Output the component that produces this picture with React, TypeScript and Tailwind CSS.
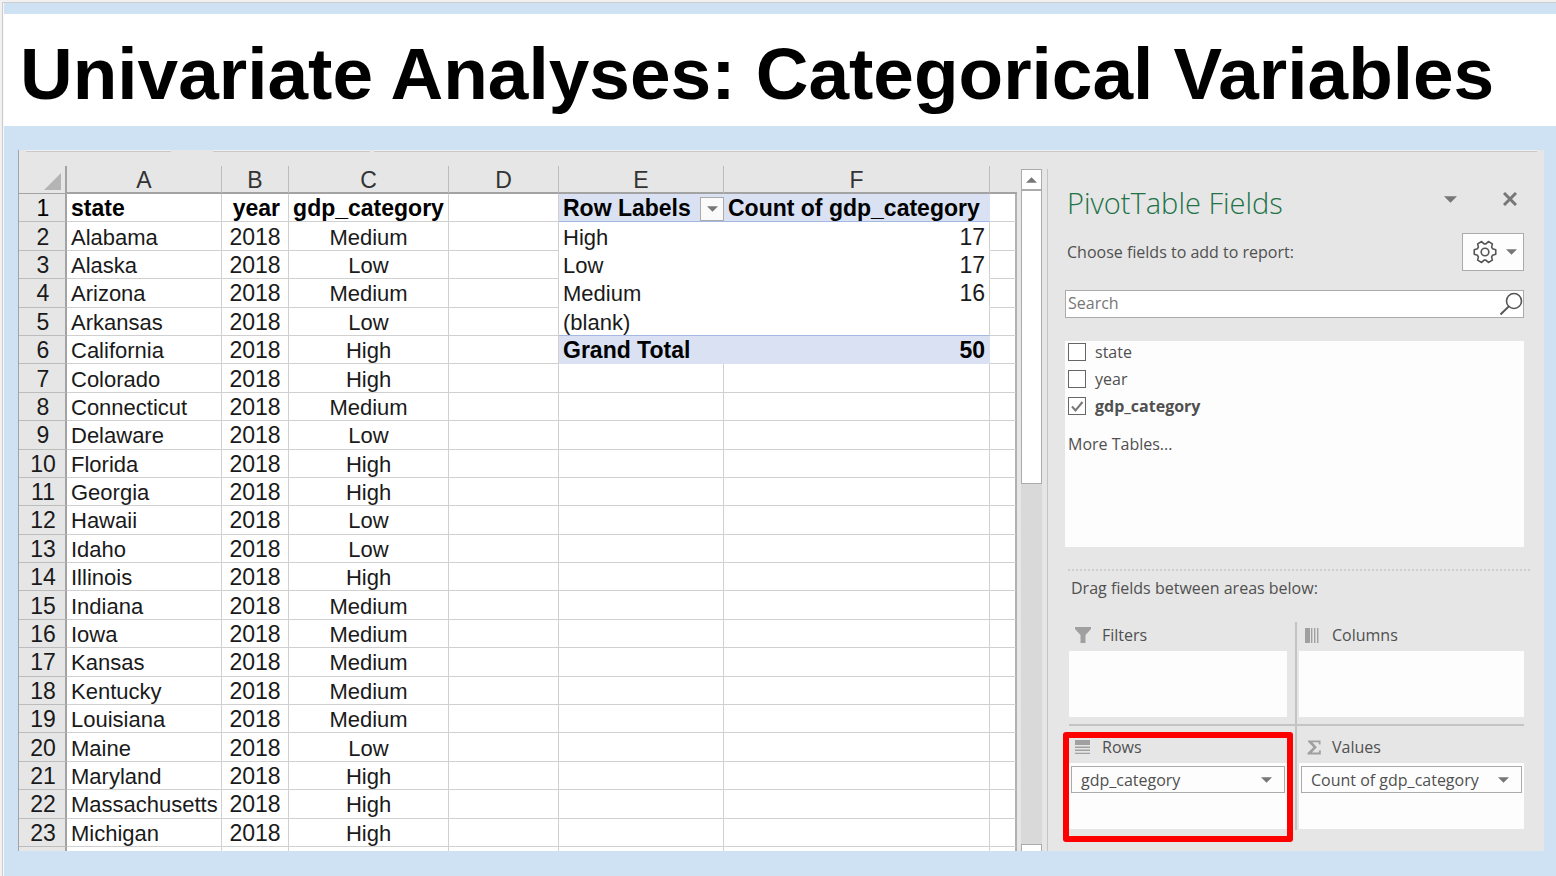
import React from "react";

const STATES: [string, string][] = [
  ["Alabama", "Medium"],
  ["Alaska", "Low"],
  ["Arizona", "Medium"],
  ["Arkansas", "Low"],
  ["California", "High"],
  ["Colorado", "High"],
  ["Connecticut", "Medium"],
  ["Delaware", "Low"],
  ["Florida", "High"],
  ["Georgia", "High"],
  ["Hawaii", "Low"],
  ["Idaho", "Low"],
  ["Illinois", "High"],
  ["Indiana", "Medium"],
  ["Iowa", "Medium"],
  ["Kansas", "Medium"],
  ["Kentucky", "Medium"],
  ["Louisiana", "Medium"],
  ["Maine", "Low"],
  ["Maryland", "High"],
  ["Massachusetts", "High"],
  ["Michigan", "High"],
];

const PIVOT: [string, string][] = [
  ["High", "17"],
  ["Low", "17"],
  ["Medium", "16"],
  ["(blank)", ""],
  ["Grand Total", "50"],
];

function Caret({ className = "" }: { className?: string }) {
  return (
    <svg viewBox="0 0 12 6" className={className} fill="currentColor" aria-hidden="true">
      <path d="M0 0h12L6 6z" />
    </svg>
  );
}

const GEAR_POINTS = [0, 60, 120, 180, 240, 300]
  .flatMap((a) => [
    [a - 24, 8.2],
    [a - 12, 11],
    [a + 12, 11],
    [a + 24, 8.2],
  ])
  .map(([deg, r]) => {
    const t = (deg * Math.PI) / 180;
    return `${(12 + r * Math.cos(t)).toFixed(2)},${(12 + r * Math.sin(t)).toFixed(2)}`;
  })
  .join(" ");

function GearIcon() {
  return (
    <svg viewBox="0 0 24 24" className="size-6" fill="none" stroke="#555" strokeWidth="1.6" strokeLinejoin="round" aria-hidden="true">
      <polygon points={GEAR_POINTS} />
      <circle cx="12" cy="12" r="3.8" />
    </svg>
  );
}

const GRID = "border-r border-b border-[#d0d0d0]";

function PivotCells({ row }: { row: number }) {
  const data = PIVOT[row];
  if (!data) {
    return (
      <>
        <td className={GRID} />
        <td className={GRID} />
      </>
    );
  }
  const total = row === 4;
  const tone = total
    ? "bg-[#d9e1f2] border-b border-b-[#d9e1f2] font-bold text-[23px] text-black"
    : row === 3
      ? "border-b border-b-[#a3b9e2]"
      : "border-b border-b-white";
  return (
    <>
      <td className={`${tone} pl-1 text-left`}>{data[0]}</td>
      <td className={`${tone} border-r pr-1 text-right text-[23px] ${total ? "border-r-[#d9e1f2]" : "border-r-[#d0d0d0]"}`}>
        {data[1]}
      </td>
    </>
  );
}

function RowNumber({ n }: { n: number }) {
  return (
    <th scope="row" className="border-r-2 border-b border-r-[#a3a3a3] border-b-[#bcbcbc] bg-[#e6e6e6] pl-[2px] text-[23px] font-normal">
      {n}
    </th>
  );
}

function Sheet() {
  const head = "h-7 border-b-2 border-r border-b-[#a3a3a3] border-r-[#bcbcbc] pt-[3px] text-[23px] leading-[23px] font-normal text-[#333]";
  return (
    <table className="h-[685px] w-full table-fixed border-separate border-spacing-0 text-[22px] leading-[25px] text-[#1a1a1a] [&_td]:pt-[2px] [&_tbody_th]:pt-[2px]">
      <colgroup>
        <col className="w-[48px]" />
        <col className="w-[155px]" />
        <col className="w-[67px]" />
        <col className="w-[160px]" />
        <col className="w-[110px]" />
        <col className="w-[165px]" />
        <col className="w-[266px]" />
        <col />
      </colgroup>
      <thead>
        <tr>
          <td className="h-7 border-r-2 border-b border-[#a3a3a3] p-0">
            <svg viewBox="0 0 17 17" className="mt-[2px] mr-1 ml-auto size-[17px]" aria-hidden="true">
              <path d="M17 0v17H0z" fill="#b4b4b4" />
            </svg>
          </td>
          {["A", "B", "C", "D", "E", "F"].map((c) => (
            <th key={c} scope="col" className={head}>
              {c}
            </th>
          ))}
          <td className="border-b-2 border-[#a3a3a3]" />
        </tr>
      </thead>
      <tbody className="bg-white text-center">
        <tr className="text-[23px] font-bold text-black">
          <RowNumber n={1} />
          <td className={`${GRID} pl-1 text-left`}>state</td>
          <td className={`${GRID} pr-2 text-right`}>year</td>
          <td className={GRID}>gdp_category</td>
          <td className={GRID} />
          <td className="border-b border-[#a3b9e2] bg-[#d9e1f2] pl-1">
            <div className="flex items-center justify-between whitespace-nowrap">
              Row Labels
              <button
                aria-label="Filter row labels"
                className="flex size-6 items-center justify-center border border-[#ababab] bg-[#fafafa] text-[#777]"
              >
                <Caret className="h-[6px] w-[11px]" />
              </button>
            </div>
          </td>
          <td className="border-r border-b border-r-[#d9e1f2] border-b-[#a3b9e2] bg-[#d9e1f2] pl-1 text-left whitespace-nowrap">
            Count of gdp_category
          </td>
          <td className="border-r-2 border-b border-r-[#b0b0b0] border-b-[#d0d0d0]" />
        </tr>
        {STATES.map(([name, category], i) => (
          <tr key={name}>
            <RowNumber n={i + 2} />
            <td className={`${GRID} pl-1 text-left`}>{name}</td>
            <td className={`${GRID} text-[23px]`}>2018</td>
            <td className={GRID}>{category}</td>
            <td className={GRID} />
            <PivotCells row={i} />
            <td className="border-r-2 border-b border-r-[#b0b0b0] border-b-[#d0d0d0]" />
          </tr>
        ))}
        <tr className="h-1 leading-none">
          <td className="h-1 border-r-2 border-[#a3a3a3] bg-[#e6e6e6] p-0" />
          {["A", "B", "C", "D", "E", "F"].map((c) => (
            <td key={c} className="h-1 border-r border-[#d0d0d0] p-0" />
          ))}
          <td className="h-1 border-r-2 border-[#b0b0b0] p-0" />
        </tr>
      </tbody>
    </table>
  );
}

function ScrollBar() {
  return (
    <div className="ml-1 flex w-[21px] flex-col bg-[#d9d9d9]">
      <button aria-label="Scroll up" className="flex h-[21px] items-center justify-center border border-[#ababab] bg-white text-[#777]">
        <Caret className="h-[6px] w-[11px] rotate-180" />
      </button>
      <div className="h-[294px] border border-[#ababab] bg-white" />
      <div className="flex-1" />
      <div className="h-[7px] border border-b-0 border-[#ababab] bg-white" />
    </div>
  );
}

function FieldBox({ label, checked = false }: { label: string; checked?: boolean }) {
  return (
    <label className={`flex h-[27px] items-center gap-[9px] ${checked ? "font-bold" : ""}`}>
      <span className="relative flex size-[18px]">
        <input
          type="checkbox"
          defaultChecked={checked}
          className="peer size-[18px] appearance-none border border-[#666] bg-white"
        />
        <svg
          viewBox="0 0 18 18"
          className="pointer-events-none absolute inset-0 hidden peer-checked:block"
          fill="none"
          stroke="#777"
          strokeWidth="2"
          aria-hidden="true"
        >
          <path d="M4 9.5l3.5 4L14.5 5" />
        </svg>
      </span>
      {label}
    </label>
  );
}

function Area({ icon, title, item }: { icon: React.ReactNode; title: string; item?: string }) {
  return (
    <section>
      <h3 className="flex h-8 items-center gap-[9px] pl-[6px]">
        <span className="flex w-[18px] text-[#a0a0a0]">{icon}</span>
        {title}
      </h3>
      <div className="h-[66px] bg-[#fdfdfd] px-[2px] pt-[3px]">
        {item && (
          <button className="flex h-[27px] w-full items-center justify-between border border-[#ababab] pr-3 pl-[9px] text-left whitespace-nowrap">
            {item}
            <Caret className="h-[6px] w-[11px] text-[#777]" />
          </button>
        )}
      </div>
    </section>
  );
}

const filterIcon = (
  <svg viewBox="0 0 16 16" className="size-4" fill="currentColor" aria-hidden="true">
    <path d="M0 0h16v2l-5.500 6v8H5.500V8L0 2z" />
  </svg>
);
const columnsIcon = (
  <svg viewBox="0 0 14 15" className="h-[15px] w-[14px]" fill="currentColor" aria-hidden="true">
    <path d="M0 0h5v15H0zM6 0h1.4v15H6zM9 0h1.4v15H9zM12 0h1.4v15H12z" />
  </svg>
);
const rowsIcon = (
  <svg viewBox="0 0 15 15" className="size-[15px]" fill="currentColor" aria-hidden="true">
    <path d="M0 0h15v5H0zM0 6.5h15v1.4H0zM0 9.6h15V11H0zM0 12.7h15v1.4H0z" />
  </svg>
);
const sumIcon = (
  <svg viewBox="0 0 15 15" className="ml-[2px] size-[15px]" fill="currentColor" aria-hidden="true">
    <path d="M1 0.500h12.500v4h-1.400l-.7-2.200H5.300l4.600 5-5 5.200h6.700l.8-2.300h1.400v4.200H.5v-1.300l5.800-5.900L1 1.800z" />
  </svg>
);

function FieldsPane() {
  return (
    <aside className="flex w-[497px] shrink-0 flex-col border-l border-[#c4c4c4] pr-5 pl-[17px] font-['Open_Sans','Noto_Sans',sans-serif] text-[16px] leading-5 text-[#505050]">
      <div className="mt-3 flex h-11 items-center pl-[2px]">
        <h2 className="flex-1 text-[29px] leading-11 font-light text-[#217346]">PivotTable Fields</h2>
        <button aria-label="Pane options" className="mr-[46px] mb-2 text-[#777]">
          <Caret className="h-[7px] w-[13px]" />
        </button>
        <button aria-label="Close pane" className="mr-[7px] mb-2">
          <svg viewBox="0 0 14 14" className="size-[14px]" stroke="#777" strokeWidth="3" aria-hidden="true">
            <path d="M1 1l12 12M13 1L1 13" />
          </svg>
        </button>
      </div>
      <div className="mt-2 flex h-[38px] items-center justify-between pl-[2px]">
        <p>Choose fields to add to report:</p>
        <button aria-label="Tools" className="flex h-[38px] w-[62px] items-center justify-center gap-[9px] border border-[#ababab] bg-[#fdfdfd] pl-1">
          <GearIcon />
          <Caret className="h-[6px] w-[11px] text-[#777]" />
        </button>
      </div>
      <div className="mt-[19px] flex h-7 items-center border border-[#ababab] bg-white">
        <input aria-label="Search" placeholder="Search" className="h-6 min-w-0 flex-1 pb-[3px] pl-[2px] outline-none placeholder:text-[#777]" />
        <svg viewBox="0 0 24 24" className="size-6" fill="none" stroke="#555" strokeWidth="1.6" aria-hidden="true">
          <circle cx="15" cy="9" r="7.5" />
          <path d="M9.8 14.4L1.5 22.5" strokeWidth="2" />
        </svg>
      </div>
      <div className="mt-[23px] h-[206px] bg-[#fdfdfd] pl-[3px]">
        <div className="-mt-[3px]">
          <FieldBox label="state" />
          <FieldBox label="year" />
          <FieldBox label="gdp_category" checked />
        </div>
        <a href="#more" className="mt-[15px] block">
          More Tables...
        </a>
      </div>
      <div className="mt-[22px] -mr-[6px] ml-[3px] border-t-2 border-dotted border-[#cfcfcf]" />
      <p className="mt-[7px] ml-[6px]">Drag fields between areas below:</p>
      <div className="mt-[24px] ml-1 grid grid-cols-[218fr_237fr] grid-rows-[104px_104px]">
        <div className="border-b-2 border-[#c4c4c4]">
          <div className="-mt-[3px]">
            <Area icon={filterIcon} title="Filters" />
          </div>
        </div>
        <div className="relative ml-2 border-b-2 border-l-2 border-[#c4c4c4] pl-[2px] before:absolute before:-bottom-[2px] before:-left-[10px] before:w-2 before:border-b-2 before:border-[#c4c4c4]">
          <div className="-mt-[3px]">
            <Area icon={columnsIcon} title="Columns" />
          </div>
        </div>
        <div className="relative pt-[5px]">
          <Area icon={rowsIcon} title="Rows" item="gdp_category" />
          <div className="pointer-events-none absolute -inset-x-[6px] top-[6px] -bottom-[12px] rounded-[3px] border-[6px] border-[#fe0000]" />
        </div>
        <div className="ml-2 border-l-2 border-[#c4c4c4] pt-[5px] pl-[2px]">
          <Area icon={sumIcon} title="Values" item="Count of gdp_category" />
        </div>
      </div>
    </aside>
  );
}

export default function App() {
  return (
    <div className="min-h-screen overflow-hidden bg-[#f1f1f1] pt-[2px] pl-[2px]">
      <div className="border-t border-l border-[#cccccc] bg-[#f8f8f8] pl-px">
        <main className="min-h-[873px] bg-[#cfe2f3] pt-[11px] font-['Liberation_Sans',Arial,sans-serif]">
          <header className="h-[112px] bg-white pl-4">
            <h1 className="pt-[18px] text-[73px] leading-[84px] font-bold whitespace-nowrap text-black">
              Univariate Analyses: Categorical Variables
            </h1>
          </header>
          <div className="mt-6 mr-3 ml-[14px] h-[701px] overflow-hidden border-l border-[#a3a3a3] bg-[#e6e6e6]">
            <div className="flex h-4 items-start gap-1 pr-[7px] pl-[7px]">
              <div className="h-[2px] w-[145px] border-b border-[#c8c8c8] bg-[#f0f0f0]" />
              <div className="ml-[38px] h-[2px] w-[157px] border-b border-[#c8c8c8] bg-[#f0f0f0]" />
              <div className="h-[2px] flex-1 border-b border-[#c8c8c8] bg-[#f0f0f0]" />
            </div>
            <div className="flex h-[685px]">
              <div className="min-w-0 flex-1">
                <Sheet />
              </div>
              <div className="mt-[3px] flex">
                <ScrollBar />
                <div className="w-[5px]" />
                <FieldsPane />
              </div>
            </div>
          </div>
        </main>
      </div>
    </div>
  );
}
